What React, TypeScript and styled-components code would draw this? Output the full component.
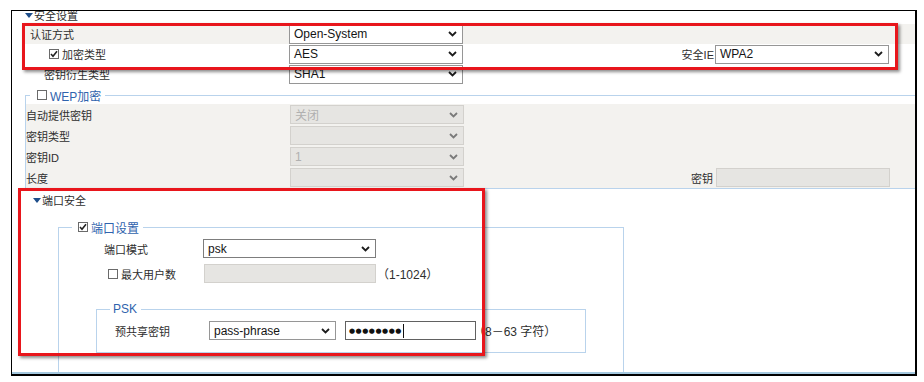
import styled, { createGlobalStyle } from "styled-components"

const GlobalStyle = createGlobalStyle`
  html, body {
    margin: 0;
    padding: 0;
    background: #fff;
  }
  body {
    font-family: "Liberation Sans", "Noto Sans CJK SC", sans-serif;
    font-size: 11px;
    color: #2e2e2e;
  }
`

const Frame = styled.div`
  position: relative;
  margin: 10px 0 0 11px;
  width: 903px;
  height: 363px;
  border: 1px solid #000;
  border-right-width: 2px;
  border-bottom-width: 2px;
  overflow: hidden;
`

const Content = styled.div`
  height: 361px;
  border-bottom: 2px solid #a4c8df;
  overflow: hidden;
`

const SectionHeader = styled.div<{ $indent: number; $top: number }>`
  display: flex;
  align-items: center;
  height: 14px;
  margin-top: ${(p) => p.$top}px;
  padding-left: ${(p) => p.$indent}px;
`

const Caret = styled.span`
  width: 0;
  height: 0;
  margin-right: 1px;
  border-left: 4px solid transparent;
  border-right: 4px solid transparent;
  border-top: 5px solid #1d4d8a;
`

const Group = styled.div`
  margin: 2px 0 0 11px;
`

const Row = styled.div<{ $height?: number; $shade?: boolean }>`
  display: flex;
  align-items: center;
  height: ${(p) => p.$height ?? 20}px;
  background: ${(p) => (p.$shade ? "#f3f2ef" : "transparent")};
`

const LabelCell = styled.div<{ $width: number; $indent?: number }>`
  display: flex;
  align-items: center;
  gap: 3px;
  box-sizing: border-box;
  flex-shrink: 0;
  width: ${(p) => p.$width}px;
  padding-left: ${(p) => p.$indent ?? 0}px;
  white-space: nowrap;
`

const SideLabel = styled.div<{ $gap?: number }>`
  flex: 1;
  text-align: right;
  padding-right: ${(p) => p.$gap ?? 1}px;
  white-space: nowrap;
`

const SelectBox = styled.div<{ $width: number; $disabled?: boolean; $strong?: boolean }>`
  display: flex;
  align-items: center;
  justify-content: space-between;
  box-sizing: border-box;
  flex-shrink: 0;
  width: ${(p) => p.$width}px;
  height: 19px;
  padding: 0 5px 0 4px;
  border: 1px solid
    ${(p) => (p.$disabled ? "#d3d1cd" : p.$strong ? "#7d7d7d" : "#969696")};
  background: ${(p) => (p.$disabled ? "#e6e5e2" : "#fff")};
  color: ${(p) => (p.$disabled ? "#b0b0b0" : "#141414")};
  font-size: 12px;
`

const TextBox = styled.div<{ $width: number; $disabled?: boolean }>`
  display: flex;
  align-items: center;
  box-sizing: border-box;
  flex-shrink: 0;
  width: ${(p) => p.$width}px;
  height: 19px;
  padding: 0 3px;
  border: 1px solid ${(p) => (p.$disabled ? "#d3d1cd" : "#616161")};
  background: ${(p) => (p.$disabled ? "#e6e5e2" : "#fff")};
`

const Dots = styled.span`
  font-family: "DejaVu Sans", sans-serif;
  font-size: 7px;
  letter-spacing: 0.5px;
  color: #111;
`

const TextCaret = styled.span`
  width: 1px;
  height: 14px;
  margin-left: 1px;
  background: #111;
`

const Hint = styled.span<{ $gap: number }>`
  margin-left: ${(p) => p.$gap}px;
  font-size: 12px;
  white-space: nowrap;
`

const Box = styled.span`
  display: inline-flex;
  align-items: center;
  justify-content: center;
  box-sizing: border-box;
  width: 10px;
  height: 10px;
  border: 1px solid #6a6a6a;
  background: #fff;
`

const Fieldset = styled.fieldset<{
  $left: number
  $top: number
  $width?: number
  $openRight?: boolean
  $padTop: number
  $padBottom: number
}>`
  box-sizing: border-box;
  min-width: 0;
  margin: ${(p) => p.$top}px 0 0 ${(p) => p.$left}px;
  width: ${(p) => (p.$width ? `${p.$width}px` : "auto")};
  padding: ${(p) => p.$padTop}px 0 ${(p) => p.$padBottom}px 0;
  border: 1px solid #b9d3ec;
  border-right-style: ${(p) => (p.$openRight ? "none" : "solid")};
`

const Legend = styled.legend<{ $offset: number; $padLeft: number }>`
  display: flex;
  align-items: center;
  gap: 3px;
  height: 14px;
  margin-left: ${(p) => p.$offset}px;
  padding: 0 4px 0 ${(p) => p.$padLeft}px;
  color: #2f63ad;
  font-size: 12px;
`

const RowStack = styled.div<{ $gap: number }>`
  display: flex;
  flex-direction: column;
  gap: ${(p) => p.$gap}px;
`

const Highlight = styled.div<{ $x: number; $y: number; $w: number; $h: number }>`
  position: absolute;
  left: ${(p) => p.$x}px;
  top: ${(p) => p.$y}px;
  width: ${(p) => p.$w}px;
  height: ${(p) => p.$h}px;
  box-sizing: border-box;
  border: 3px solid #e8161c;
  box-shadow: 2px 2px 3px rgba(0, 0, 0, 0.45);
  pointer-events: none;
`

function Chevron({ muted }: { muted?: boolean }) {
  return (
    <svg width="9" height="6" viewBox="0 0 9 6">
      <path
        d="M1 1l3.5 3.5L8 1"
        fill="none"
        stroke={muted ? "#7a7a7a" : "#1c1c1c"}
        strokeWidth="1.8"
      />
    </svg>
  )
}

function Select({
  value,
  width,
  disabled,
  strong,
}: {
  value?: string
  width: number
  disabled?: boolean
  strong?: boolean
}) {
  return (
    <SelectBox $width={width} $disabled={disabled} $strong={strong}>
      <span>{value}</span>
      <Chevron muted={disabled} />
    </SelectBox>
  )
}

function Checkbox({ checked }: { checked?: boolean }) {
  return (
    <Box>
      {checked && (
        <svg width="8" height="8" viewBox="0 0 8 8">
          <path d="M1 4l2 2.2L7 1.2" fill="none" stroke="#222" strokeWidth="1.6" />
        </svg>
      )}
    </Box>
  )
}

export default function App() {
  return (
    <>
      <GlobalStyle />
      <Frame>
        <Content>
          <SectionHeader $indent={13} $top={-3}>
            <Caret />
            安全设置
          </SectionHeader>

          <Group>
            <Row $shade>
              <LabelCell $width={266} $indent={7}>
                认证方式
              </LabelCell>
              <Select value="Open-System" width={174} />
            </Row>
            <Row>
              <LabelCell $width={266} $indent={26}>
                <Checkbox checked />
                加密类型
              </LabelCell>
              <Select value="AES" width={174} />
              <SideLabel>安全IE</SideLabel>
              <Select value="WPA2" width={174} />
              <span style={{ width: 26 }} />
            </Row>
            <Row>
              <LabelCell $width={266} $indent={21}>
                密钥衍生类型
              </LabelCell>
              <Select value="SHA1" width={174} />
            </Row>
          </Group>

          <Fieldset $left={13} $top={4} $openRight $padTop={2} $padBottom={0}>
            <Legend $offset={4} $padLeft={7}>
              <Checkbox />
              WEP加密
            </Legend>
            <Row $height={21} $shade>
              <LabelCell $width={264}>自动提供密钥</LabelCell>
              <Select value="关闭" width={174} disabled />
            </Row>
            <Row $height={21} $shade>
              <LabelCell $width={264}>密钥类型</LabelCell>
              <Select width={174} disabled />
            </Row>
            <Row $height={21} $shade>
              <LabelCell $width={264}>密钥ID</LabelCell>
              <Select value="1" width={174} disabled />
            </Row>
            <Row $height={21} $shade>
              <LabelCell $width={264}>长度</LabelCell>
              <Select width={174} disabled />
              <SideLabel $gap={3}>密钥</SideLabel>
              <TextBox $width={174} $disabled />
              <span style={{ width: 25 }} />
            </Row>
          </Fieldset>

          <SectionHeader $indent={21} $top={4}>
            <Caret />
            端口安全
          </SectionHeader>

          <Fieldset $left={46} $top={13} $width={566} $padTop={4} $padBottom={60}>
            <Legend $offset={13} $padLeft={6}>
              <Checkbox checked />
              端口设置
            </Legend>
            <RowStack $gap={4}>
              <Row $height={21}>
                <LabelCell $width={144} $indent={45}>
                  端口模式
                </LabelCell>
                <Select value="psk" width={173} strong />
              </Row>
              <Row $height={21}>
                <LabelCell $width={145} $indent={49}>
                  <Checkbox />
                  最大用户数
                </LabelCell>
                <TextBox $width={172} $disabled />
                <Hint $gap={1}>（1-1024）</Hint>
              </Row>
            </RowStack>

            <Fieldset $left={37} $top={18} $width={490} $padTop={4} $padBottom={11}>
              <Legend $offset={13} $padLeft={3}>
                PSK
              </Legend>
              <Row $height={21}>
                <LabelCell $width={112} $indent={18}>
                  预共享密钥
                </LabelCell>
                <Select value="pass-phrase" width={127} />
                <span style={{ width: 9 }} />
                <TextBox $width={131}>
                  <Dots>●●●●●●●●</Dots>
                  <TextCaret />
                </TextBox>
                <Hint $gap={-3}>（8－63 字符）</Hint>
              </Row>
            </Fieldset>
          </Fieldset>
        </Content>

        <Highlight $x={10} $y={12} $w={876} $h={47} />
        <Highlight $x={6} $y={177} $w={467} $h={168} />
      </Frame>
    </>
  )
}
